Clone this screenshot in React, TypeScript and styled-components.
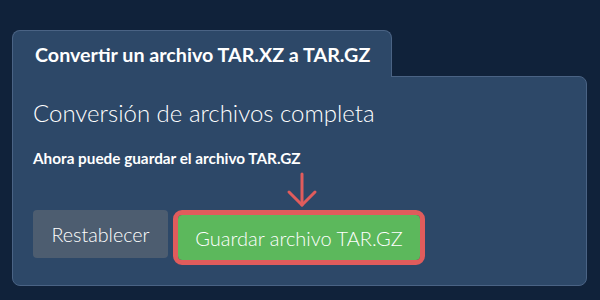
import React from 'react';
import styled, { createGlobalStyle } from 'styled-components';

const GlobalStyles = createGlobalStyle`
  html, body {
    margin: 0;
    padding: 0;
    background: #10223a;
  }
  body {
    font-family: Lato, 'Open Sans', sans-serif;
    color: #ffffff;
  }
`;

export const Page = styled.div`
  width: 600px;
  height: 300px;
  box-sizing: border-box;
  padding: 30px 13px 14px 12px;
  display: flex;
  flex-direction: column;
`;

export const Tab = styled.div`
  position: relative;
  z-index: 1;
  align-self: flex-start;
  width: 380px;
  height: 47px;
  box-sizing: border-box;
  margin-bottom: -1px;
  padding: 0 0 0 22px;
  display: flex;
  align-items: center;
  background: #2d4868;
  border: 1px solid #4a6384;
  border-bottom: none;
  border-radius: 8px 8px 0 0;
  font-size: 19.7px;
  font-weight: 700;
`;

export const Panel = styled.div`
  flex: 1;
  box-sizing: border-box;
  padding: 21px 20px 0 20px;
  background: #2d4868;
  border: 1px solid #4a6384;
  border-radius: 0 8px 8px 8px;
  display: flex;
  flex-direction: column;
`;

export const Heading = styled.div`
  font-size: 24px;
  font-weight: 300;
  line-height: 30px;
`;

export const Note = styled.div`
  font-size: 15.3px;
  font-weight: 700;
  line-height: 20px;
  margin-top: 20px;
`;

export const ArrowRow = styled.div`
  height: 36px;
  margin-top: 4px;
  padding-left: 253px;
  display: flex;
  align-items: flex-end;
`;

export const Actions = styled.div`
  display: flex;
  align-items: flex-start;
  gap: 10px;
  margin-top: 2px;
`;

export const Button = styled.button<{ $variant: 'reset' | 'save' }>`
  font-family: Lato, 'Open Sans', sans-serif;
  font-weight: 300;
  color: #ffffff;
  border: none;
  border-radius: 4px;
  cursor: pointer;
  padding: 0;
  font-size: ${p => (p.$variant === 'save' ? '20px' : '19.7px')};
  background: ${p => (p.$variant === 'save' ? '#5cb85c' : '#4d5d70')};
  outline: ${p => (p.$variant === 'save' ? '5px solid #e05c5c' : 'none')};
  outline-offset: 0;
  margin-top: ${p => (p.$variant === 'save' ? '5px' : '0')};
  height: ${p => (p.$variant === 'save' ? '45px' : '48px')};
  width: ${p => (p.$variant === 'save' ? '242px' : '135px')};
`;

const DownArrow = () => (
  <svg width="32" height="36" viewBox="0 0 32 36" fill="none">
    <path d="M16 2 V33" stroke="#e05c5c" strokeWidth="3" strokeLinecap="round" />
    <path d="M3 20 L16 33 L29 20" stroke="#e05c5c" strokeWidth="3" strokeLinecap="round" strokeLinejoin="round" />
  </svg>
);

const App = () => {
  return (
    <React.Fragment>
      <GlobalStyles />
      <Page>
        <Tab>Convertir un archivo TAR.XZ a TAR.GZ</Tab>
        <Panel>
          <Heading>Conversión de archivos completa</Heading>
          <Note>Ahora puede guardar el archivo TAR.GZ</Note>
          <ArrowRow>
            <DownArrow />
          </ArrowRow>
          <Actions>
            <Button $variant="reset">Restablecer</Button>
            <Button $variant="save">Guardar archivo TAR.GZ</Button>
          </Actions>
        </Panel>
      </Page>
    </React.Fragment>
  );
};

export default App;
